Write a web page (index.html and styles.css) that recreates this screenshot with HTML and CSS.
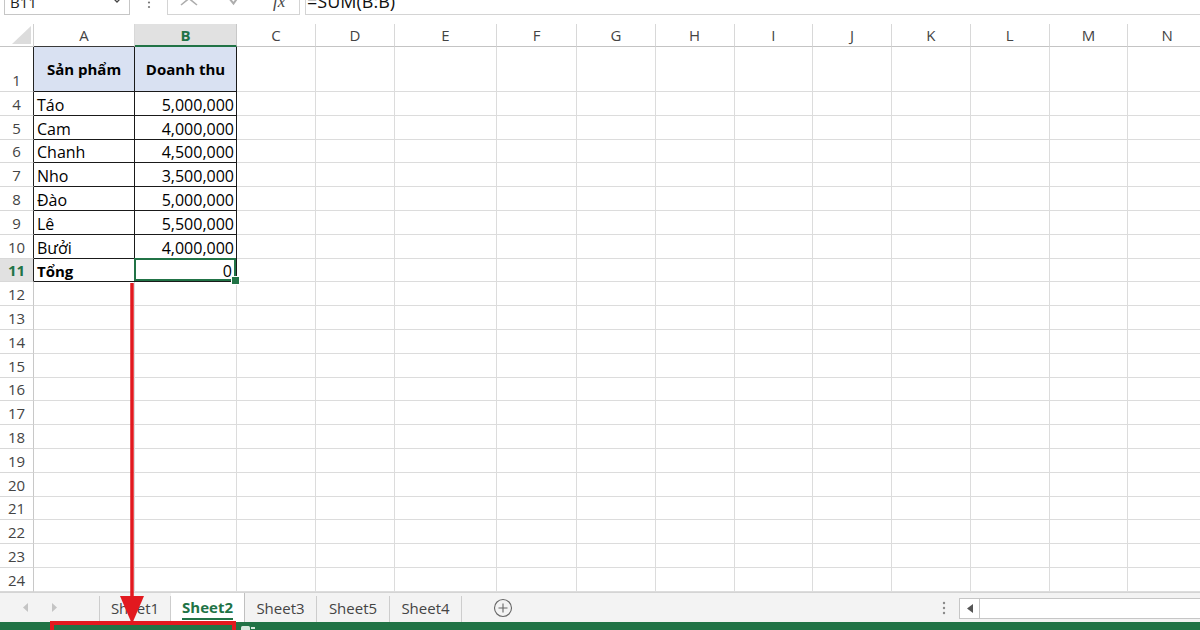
FILE: index.html
```html
<!DOCTYPE html>
<html lang="vi">
<head>
<meta charset="utf-8">
<title>Excel - SUM</title>
<link rel="stylesheet" href="styles.css">
</head>
<body>
<div class="app">
  <div class="fbar">
    <div class="fbar-in">
      <div class="namebox">
        <span class="nb-text">B11</span>
        <svg class="nb-caret" width="8" height="6" viewBox="0 0 8 6"><polyline points="1,1 4,4 7,1" fill="none" stroke="#444" stroke-width="1.3"/></svg>
      </div>
      <div class="vdots">
        <svg width="4" height="16" viewBox="0 0 4 16"><circle cx="2" cy="3" r="1.1" fill="#777"/><circle cx="2" cy="7.5" r="1.1" fill="#777"/><circle cx="2" cy="12" r="1.1" fill="#777"/></svg>
      </div>
      <div class="btns">
        <svg class="ic-x" width="18" height="14" viewBox="0 0 18 14"><path d="M1 0 L17 13 M17 0 L1 13" stroke="#adadad" stroke-width="1.6" fill="none"/></svg>
        <svg class="ic-ok" width="14" height="14" viewBox="0 0 14 14"><polyline points="1,6 5.5,11.5 13,1" fill="none" stroke="#adadad" stroke-width="2"/></svg>
        <span class="fx">fx</span>
      </div>
      <div class="formula"><span class="f-text">=SUM(B:B)</span></div>
    </div>
  </div>

  <div class="sheet">
    <div class="row hdr">
      <div class="corner"><svg width="19" height="18" viewBox="0 0 19 18"><polygon points="19,0 19,18 0,18" fill="#dcdcdc"/></svg></div>
      <div class="ch ta">A</div><div class="ch sel">B</div><div class="ch">C</div><div class="ch">D</div><div class="ch">E</div><div class="ch">F</div><div class="ch">G</div><div class="ch">H</div><div class="ch">I</div><div class="ch">J</div><div class="ch">K</div><div class="ch">L</div><div class="ch">M</div><div class="ch">N</div>
    </div>
    <div class="row r1">
      <div class="rh tl">1</div>
      <div class="c t hd">Sản phẩm</div><div class="c t hd">Doanh thu</div>
      <div class="c"></div><div class="c"></div><div class="c"></div><div class="c"></div><div class="c"></div><div class="c"></div><div class="c"></div><div class="c"></div><div class="c"></div><div class="c"></div><div class="c"></div><div class="c"></div>
    </div>
    <div class="row"><div class="rh tl">4</div><div class="c t tx">Táo</div><div class="c t num">5,000,000</div><div class="c"></div><div class="c"></div><div class="c"></div><div class="c"></div><div class="c"></div><div class="c"></div><div class="c"></div><div class="c"></div><div class="c"></div><div class="c"></div><div class="c"></div><div class="c"></div></div>
    <div class="row"><div class="rh tl">5</div><div class="c t tx">Cam</div><div class="c t num">4,000,000</div><div class="c"></div><div class="c"></div><div class="c"></div><div class="c"></div><div class="c"></div><div class="c"></div><div class="c"></div><div class="c"></div><div class="c"></div><div class="c"></div><div class="c"></div><div class="c"></div></div>
    <div class="row"><div class="rh tl">6</div><div class="c t tx">Chanh</div><div class="c t num">4,500,000</div><div class="c"></div><div class="c"></div><div class="c"></div><div class="c"></div><div class="c"></div><div class="c"></div><div class="c"></div><div class="c"></div><div class="c"></div><div class="c"></div><div class="c"></div><div class="c"></div></div>
    <div class="row"><div class="rh tl">7</div><div class="c t tx">Nho</div><div class="c t num">3,500,000</div><div class="c"></div><div class="c"></div><div class="c"></div><div class="c"></div><div class="c"></div><div class="c"></div><div class="c"></div><div class="c"></div><div class="c"></div><div class="c"></div><div class="c"></div><div class="c"></div></div>
    <div class="row"><div class="rh tl">8</div><div class="c t tx">Đào</div><div class="c t num">5,000,000</div><div class="c"></div><div class="c"></div><div class="c"></div><div class="c"></div><div class="c"></div><div class="c"></div><div class="c"></div><div class="c"></div><div class="c"></div><div class="c"></div><div class="c"></div><div class="c"></div></div>
    <div class="row"><div class="rh tl">9</div><div class="c t tx">Lê</div><div class="c t num">5,500,000</div><div class="c"></div><div class="c"></div><div class="c"></div><div class="c"></div><div class="c"></div><div class="c"></div><div class="c"></div><div class="c"></div><div class="c"></div><div class="c"></div><div class="c"></div><div class="c"></div></div>
    <div class="row"><div class="rh tl">10</div><div class="c t tx">Bưởi</div><div class="c t num">4,000,000</div><div class="c"></div><div class="c"></div><div class="c"></div><div class="c"></div><div class="c"></div><div class="c"></div><div class="c"></div><div class="c"></div><div class="c"></div><div class="c"></div><div class="c"></div><div class="c"></div></div>
    <div class="row"><div class="rh tl rsel">11</div><div class="c t tx b">Tổng</div><div class="c t num active">0</div><div class="c"></div><div class="c"></div><div class="c"></div><div class="c"></div><div class="c"></div><div class="c"></div><div class="c"></div><div class="c"></div><div class="c"></div><div class="c"></div><div class="c"></div><div class="c"></div></div>
    <div class="row"><div class="rh">12</div><div class="c"></div><div class="c"></div><div class="c"></div><div class="c"></div><div class="c"></div><div class="c"></div><div class="c"></div><div class="c"></div><div class="c"></div><div class="c"></div><div class="c"></div><div class="c"></div><div class="c"></div><div class="c"></div></div>
    <div class="row"><div class="rh">13</div><div class="c"></div><div class="c"></div><div class="c"></div><div class="c"></div><div class="c"></div><div class="c"></div><div class="c"></div><div class="c"></div><div class="c"></div><div class="c"></div><div class="c"></div><div class="c"></div><div class="c"></div><div class="c"></div></div>
    <div class="row"><div class="rh">14</div><div class="c"></div><div class="c"></div><div class="c"></div><div class="c"></div><div class="c"></div><div class="c"></div><div class="c"></div><div class="c"></div><div class="c"></div><div class="c"></div><div class="c"></div><div class="c"></div><div class="c"></div><div class="c"></div></div>
    <div class="row"><div class="rh">15</div><div class="c"></div><div class="c"></div><div class="c"></div><div class="c"></div><div class="c"></div><div class="c"></div><div class="c"></div><div class="c"></div><div class="c"></div><div class="c"></div><div class="c"></div><div class="c"></div><div class="c"></div><div class="c"></div></div>
    <div class="row"><div class="rh">16</div><div class="c"></div><div class="c"></div><div class="c"></div><div class="c"></div><div class="c"></div><div class="c"></div><div class="c"></div><div class="c"></div><div class="c"></div><div class="c"></div><div class="c"></div><div class="c"></div><div class="c"></div><div class="c"></div></div>
    <div class="row"><div class="rh">17</div><div class="c"></div><div class="c"></div><div class="c"></div><div class="c"></div><div class="c"></div><div class="c"></div><div class="c"></div><div class="c"></div><div class="c"></div><div class="c"></div><div class="c"></div><div class="c"></div><div class="c"></div><div class="c"></div></div>
    <div class="row"><div class="rh">18</div><div class="c"></div><div class="c"></div><div class="c"></div><div class="c"></div><div class="c"></div><div class="c"></div><div class="c"></div><div class="c"></div><div class="c"></div><div class="c"></div><div class="c"></div><div class="c"></div><div class="c"></div><div class="c"></div></div>
    <div class="row"><div class="rh">19</div><div class="c"></div><div class="c"></div><div class="c"></div><div class="c"></div><div class="c"></div><div class="c"></div><div class="c"></div><div class="c"></div><div class="c"></div><div class="c"></div><div class="c"></div><div class="c"></div><div class="c"></div><div class="c"></div></div>
    <div class="row"><div class="rh">20</div><div class="c"></div><div class="c"></div><div class="c"></div><div class="c"></div><div class="c"></div><div class="c"></div><div class="c"></div><div class="c"></div><div class="c"></div><div class="c"></div><div class="c"></div><div class="c"></div><div class="c"></div><div class="c"></div></div>
    <div class="row"><div class="rh">21</div><div class="c"></div><div class="c"></div><div class="c"></div><div class="c"></div><div class="c"></div><div class="c"></div><div class="c"></div><div class="c"></div><div class="c"></div><div class="c"></div><div class="c"></div><div class="c"></div><div class="c"></div><div class="c"></div></div>
    <div class="row"><div class="rh">22</div><div class="c"></div><div class="c"></div><div class="c"></div><div class="c"></div><div class="c"></div><div class="c"></div><div class="c"></div><div class="c"></div><div class="c"></div><div class="c"></div><div class="c"></div><div class="c"></div><div class="c"></div><div class="c"></div></div>
    <div class="row"><div class="rh">23</div><div class="c"></div><div class="c"></div><div class="c"></div><div class="c"></div><div class="c"></div><div class="c"></div><div class="c"></div><div class="c"></div><div class="c"></div><div class="c"></div><div class="c"></div><div class="c"></div><div class="c"></div><div class="c"></div></div>
    <div class="row"><div class="rh">24</div><div class="c"></div><div class="c"></div><div class="c"></div><div class="c"></div><div class="c"></div><div class="c"></div><div class="c"></div><div class="c"></div><div class="c"></div><div class="c"></div><div class="c"></div><div class="c"></div><div class="c"></div><div class="c"></div></div>
  </div>

  <div class="tabbar">
    <div class="nav">
      <svg width="6" height="9" viewBox="0 0 6 9"><polygon points="5,0 5,9 0,4.5" fill="#c4c4c4"/></svg>
      <svg width="6" height="9" viewBox="0 0 6 9"><polygon points="1,0 1,9 6,4.5" fill="#c4c4c4"/></svg>
    </div>
    <div class="tabs">
      <div class="tab t1">Sheet1</div>
      <div class="tab t2 on"><span>Sheet2</span></div>
      <div class="tab t3">Sheet3</div>
      <div class="tab t4">Sheet5</div>
      <div class="tab t5">Sheet4</div>
    </div>
    <div class="addsheet">
      <svg width="20" height="20" viewBox="0 0 20 20"><circle cx="10" cy="10" r="8.5" fill="none" stroke="#666" stroke-width="1.1"/><path d="M10 5.5 V14.5 M5.5 10 H14.5" stroke="#666" stroke-width="1.1"/></svg>
    </div>
    <div class="spacer"></div>
    <div class="hdots">
      <svg width="4" height="14" viewBox="0 0 4 14"><circle cx="2" cy="2" r="1.2" fill="#8a8a8a"/><circle cx="2" cy="7" r="1.2" fill="#8a8a8a"/><circle cx="2" cy="12" r="1.2" fill="#8a8a8a"/></svg>
    </div>
    <div class="hscroll">
      <div class="sb-btn"><svg width="6" height="9" viewBox="0 0 6 9"><polygon points="6,0 6,9 0,4.5" fill="#555"/></svg></div>
      <div class="sb-track"></div>
    </div>
  </div>

  <div class="status">
    <svg class="st-icon" width="14" height="10" viewBox="0 0 14 10"><rect x="0" y="2" width="9" height="8" rx="1.5" fill="#d7e8de"/><rect x="10" y="3" width="4" height="2" fill="#d7e8de"/></svg>
  </div>
</div>

<svg class="red-arrow" width="30" height="346" viewBox="0 0 30 346">
  <line x1="14" y1="2" x2="14" y2="320" stroke="#e2191f" stroke-width="3.5"/>
  <polygon points="2,315 26,315 14,343" fill="#e2191f"/>
</svg>
<div class="red-box"></div>
</body>
</html>
```

FILE: styles.css
```css
* { box-sizing: border-box; margin: 0; padding: 0; }
html, body { width: 1200px; height: 630px; overflow: hidden; background: #fff; }
body { font-family: "Open Sans", "Noto Sans", sans-serif; color: #000; position: relative; }

.app { display: flex; flex-direction: column; height: 630px; }

/* formula bar */
.fbar { height: 24px; flex: none; overflow: hidden; }
.fbar-in { display: flex; height: 23px; margin-top: -8px; }
.namebox { margin-left: 4px; width: 126px; border: 1px solid #c6c6c6; display: flex; justify-content: space-between; align-items: flex-start; padding: 0 8px 0 5px; font-size: 15px; line-height: 20px; color: #222; }
.nb-text { margin-top: -1px; }
.nb-caret { margin-top: 5px; }
.vdots { width: 37px; display: flex; justify-content: center; align-items: flex-start; padding-top: 3px; }
.btns { width: 133px; border: 1px solid #d4d4d4; display: flex; align-items: flex-start; }
.ic-x { margin-left: 12px; margin-top: -1px; }
.ic-ok { margin-left: 30px; margin-top: -1px; }
.fx { margin-left: 31px; font-family: "Liberation Serif", serif; font-style: italic; font-size: 17px; line-height: 20px; color: #444; margin-top: -1px; }
.formula { flex: 1; margin-left: 5px; border: 1px solid #d4d4d4; border-right: none; padding-left: 1px; display: flex; align-items: flex-start; }
.f-text { font-size: 18px; line-height: 22px; margin-top: -3px; color: #111; }

/* sheet */
.sheet { flex: none; display: flex; flex-direction: column; height: 568px; overflow: hidden; }
.row { display: grid; grid-template-columns: 34px 101px 102px 79px 79px 102px 80px repeat(8, 78.75px); height: 23.8px; flex: none; }
.row.hdr { height: 23px; }
.row.r1 { height: 45px; }

.corner { border-right: 1px solid #d0d0d0; border-bottom: 1px solid #c4c4c4; display: flex; justify-content: flex-end; align-items: flex-end; padding: 0 2px 2px 0; }
.ch { border-right: 1px solid #d8d8d8; border-bottom: 1px solid #c4c4c4; display: flex; justify-content: center; align-items: center; font-size: 15px; color: #444; }
.ch.ta { border-bottom-color: #3a3a3a; }
.ch.sel { background: #e1e1e1; color: #217346; font-weight: 700; border-bottom: 2px solid #217346; border-right-color: #c8c8c8; }

.rh { border-right: 1px solid #c8c8c8; border-bottom: 1px solid #d8d8d8; display: flex; justify-content: center; align-items: flex-end; font-size: 15px; line-height: 20px; color: #444; padding-bottom: 1px; }
.rh.tl { border-right-color: #222; }
.rh.rsel { background: #e1e1e1; color: #217346; font-weight: 700; }

.c { border-right: 1px solid #dcdcdc; border-bottom: 1px solid #dcdcdc; font-size: 16px; line-height: 20px; display: flex; align-items: flex-end; white-space: nowrap; }
.c.t { border-right-color: #1a1a1a; border-bottom-color: #1a1a1a; }
.c.hd { background: #d9e1f2; font-weight: 700; font-size: 15px; justify-content: center; align-items: center; }
.c.tx { padding-left: 3px; }
.c.num { justify-content: flex-end; padding-right: 2px; }
.c.num.active { padding-right: 4px; }
.c.b { font-weight: 700; font-size: 15px; }
.c.active { position: relative; }
.c.active::after { content: ""; position: absolute; top: -1px; left: -1px; right: 0; bottom: 0; border: 2px solid #217346; }
.c.active::before { content: ""; position: absolute; right: -4px; bottom: -4px; width: 7px; height: 7px; background: #217346; border: 1px solid #fff; z-index: 2; }

/* sheet tabs */
.tabbar { flex: none; height: 30px; background: #f3f3f3; border-top: 1px solid #d4d4d4; display: flex; align-items: stretch; }
.nav { width: 99px; display: flex; align-items: center; padding-left: 23px; gap: 22px; }
.tabs { display: flex; border-left: 1px solid #cdcdcd; margin: 3px 0 0; }
.tab { display: flex; justify-content: center; align-items: center; border-right: 1px solid #cdcdcd; font-size: 15px; color: #444; padding-bottom: 2px; }
.t1 { width: 71px; }
.t2 { width: 74px; }
.t3 { width: 72px; }
.t4 { width: 73px; }
.t5 { width: 72px; }
.tab.on { background: #fff; color: #217346; font-weight: 700; margin-top: -3px; border-right-color: #c0c0c0; }
.tab.on span { border-bottom: 2px solid #217346; padding-top: 4px; line-height: 20px; padding-bottom: 1px; }
.addsheet { margin-left: 31px; display: flex; align-items: center; padding-top: 1px; }
.spacer { flex: 1; }
.hdots { width: 16px; display: flex; justify-content: center; align-items: center; margin-right: 7px; }
.hscroll { width: 241px; display: flex; margin: 5px 0 3px; border: 1px solid #c6c6c6; border-right: none; background: #fff; }
.sb-btn { width: 20px; border-right: 1px solid #c6c6c6; display: flex; justify-content: center; align-items: center; }
.sb-track { flex: 1; }

/* status bar */
.status { flex: 1; background: #217346; position: relative; display: flex; align-items: flex-start; padding-left: 241px; padding-top: 2px; }

/* annotation overlays */
.red-arrow { position: absolute; left: 118px; top: 281px; }
.red-box { position: absolute; left: 50px; top: 621px; width: 186px; height: 16px; border: 4px solid #e2191f; }
```
